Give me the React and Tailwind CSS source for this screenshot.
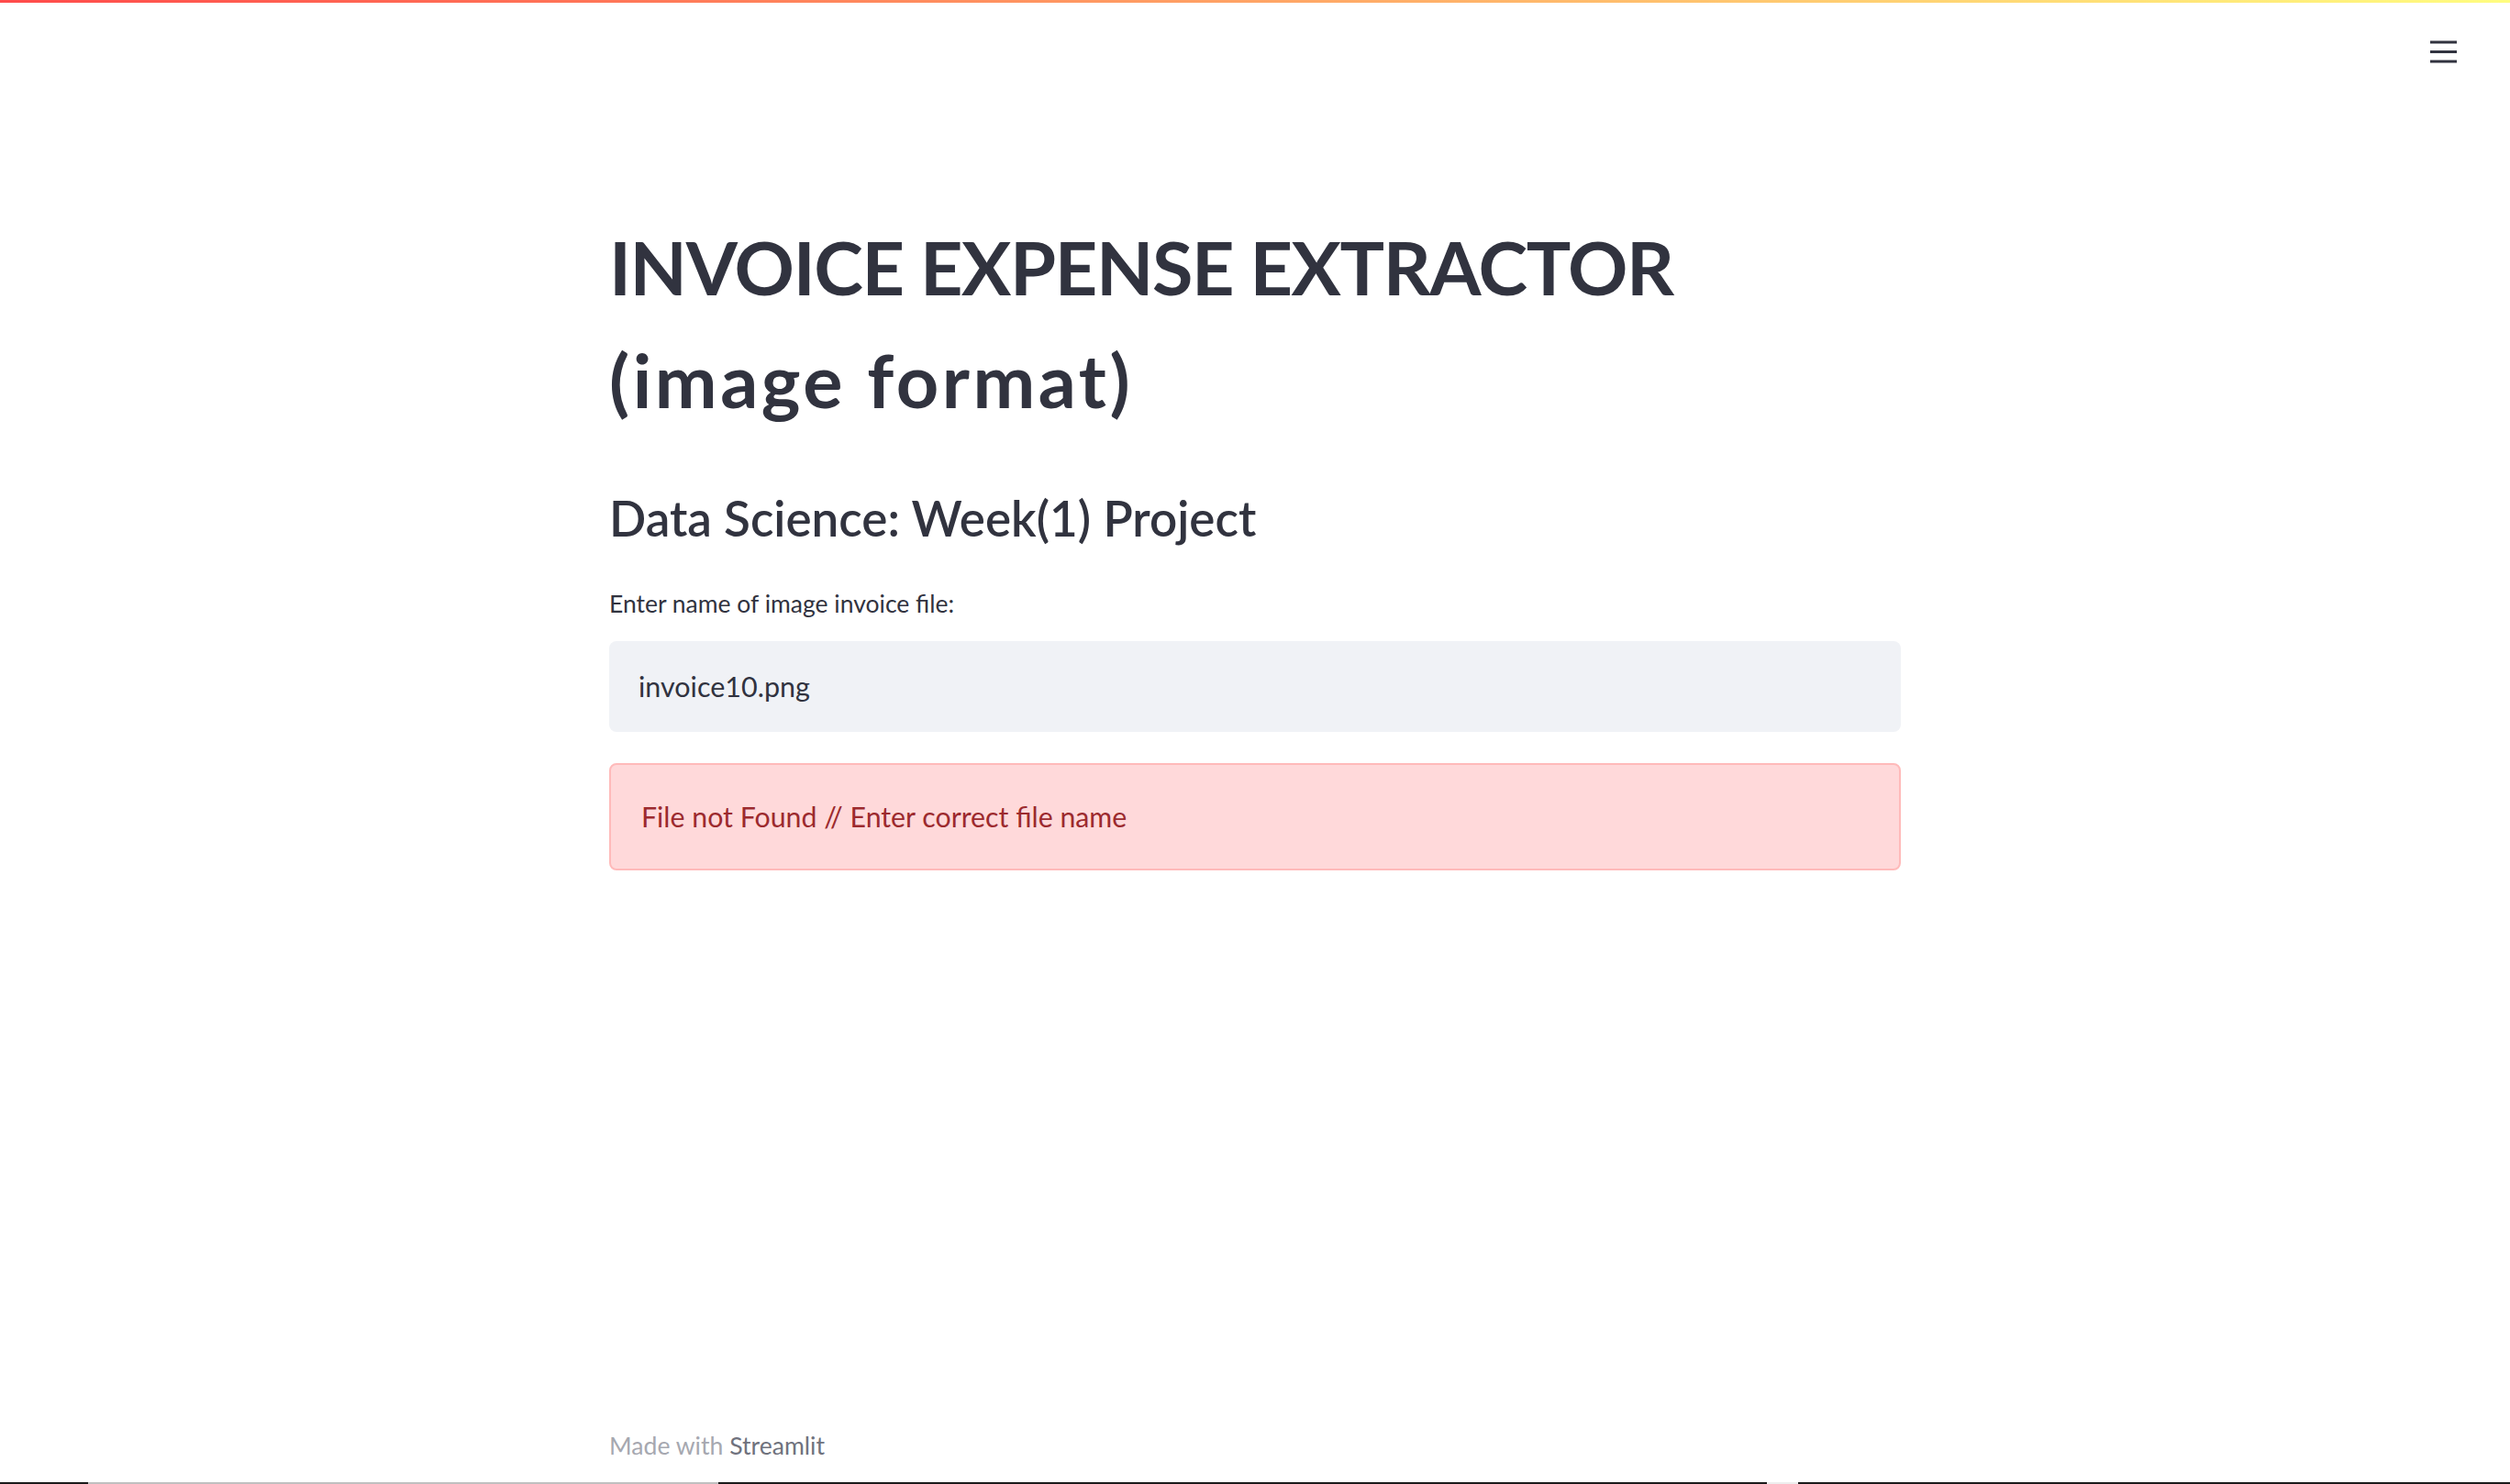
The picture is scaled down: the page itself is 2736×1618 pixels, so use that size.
import React from "react";

function MenuIcon() {
  return (
    <svg width="29" height="25" viewBox="0 0 29 25" fill="none">
      <rect x="0" y="0.5" width="29" height="3" fill="#31333f" />
      <rect x="0" y="11" width="29" height="3" fill="#31333f" />
      <rect x="0" y="21.5" width="29" height="3" fill="#31333f" />
    </svg>
  );
}

export default function App() {
  return (
    <div
      className="relative flex h-[1618px] w-full flex-col overflow-hidden bg-white text-[#31333f]"
      style={{ fontFamily: "Lato, 'Noto Sans', 'DejaVu Sans', sans-serif" }}
    >
      <div className="h-[3px] w-full shrink-0 bg-[linear-gradient(90deg,#ff4b4b,#fffd80)]" />
      <header className="flex h-[80px] shrink-0 items-start justify-end pr-[58px] pt-[41px]">
        <button className="flex items-center justify-center">
          <MenuIcon />
        </button>
      </header>

      <main className="flex flex-1 flex-col">
        <div className="mx-auto flex w-[1408px] flex-1 flex-col">
          <h1 className="mt-[146px] text-[81px] font-bold leading-[123px] tracking-[-1.4px]">
            INVOICE EXPENSE EXTRACTOR
            <br />
            <span className="tracking-[3.5px]">(image format)</span>
          </h1>

          <h3 className="mt-[51px] text-[53px] font-semibold leading-[78px]">
            Data Science: Week(1) Project
          </h3>

          <label className="mt-[34px] block text-[26.5px] leading-[40px]">
            Enter name of image invoice file:
          </label>

          <div className="mt-[21px] flex h-[99px] w-full items-center rounded-[8px] bg-[#f0f2f6] px-[32px] text-[30.5px]">
            invoice10.png
          </div>

          <div className="mt-[34px] flex h-[117px] w-full items-center rounded-[8px] border-2 border-[#ffbaba] bg-[#ffd9da] px-[33px] text-[30.3px] text-[#9c2a2e]">
            File not Found // Enter correct file name
          </div>

          <div className="flex-1" />

          <footer className="mb-[20px] text-[26.6px] leading-[40px] text-[#a6a8b0]">
            Made with <span className="text-[#6f727d]">Streamlit</span>
          </footer>
        </div>
      </main>

      <div className="flex h-[2px] w-full shrink-0">
        <div className="w-[96px] bg-[#1b1b1b]" />
        <div className="w-[687px] bg-[#c0c0c0]" />
        <div className="w-[1143px] bg-[#1b1b1b]" />
        <div className="w-[34px] bg-[#eeeeee]" />
        <div className="flex-1 bg-[#1b1b1b]" />
      </div>
    </div>
  );
}
